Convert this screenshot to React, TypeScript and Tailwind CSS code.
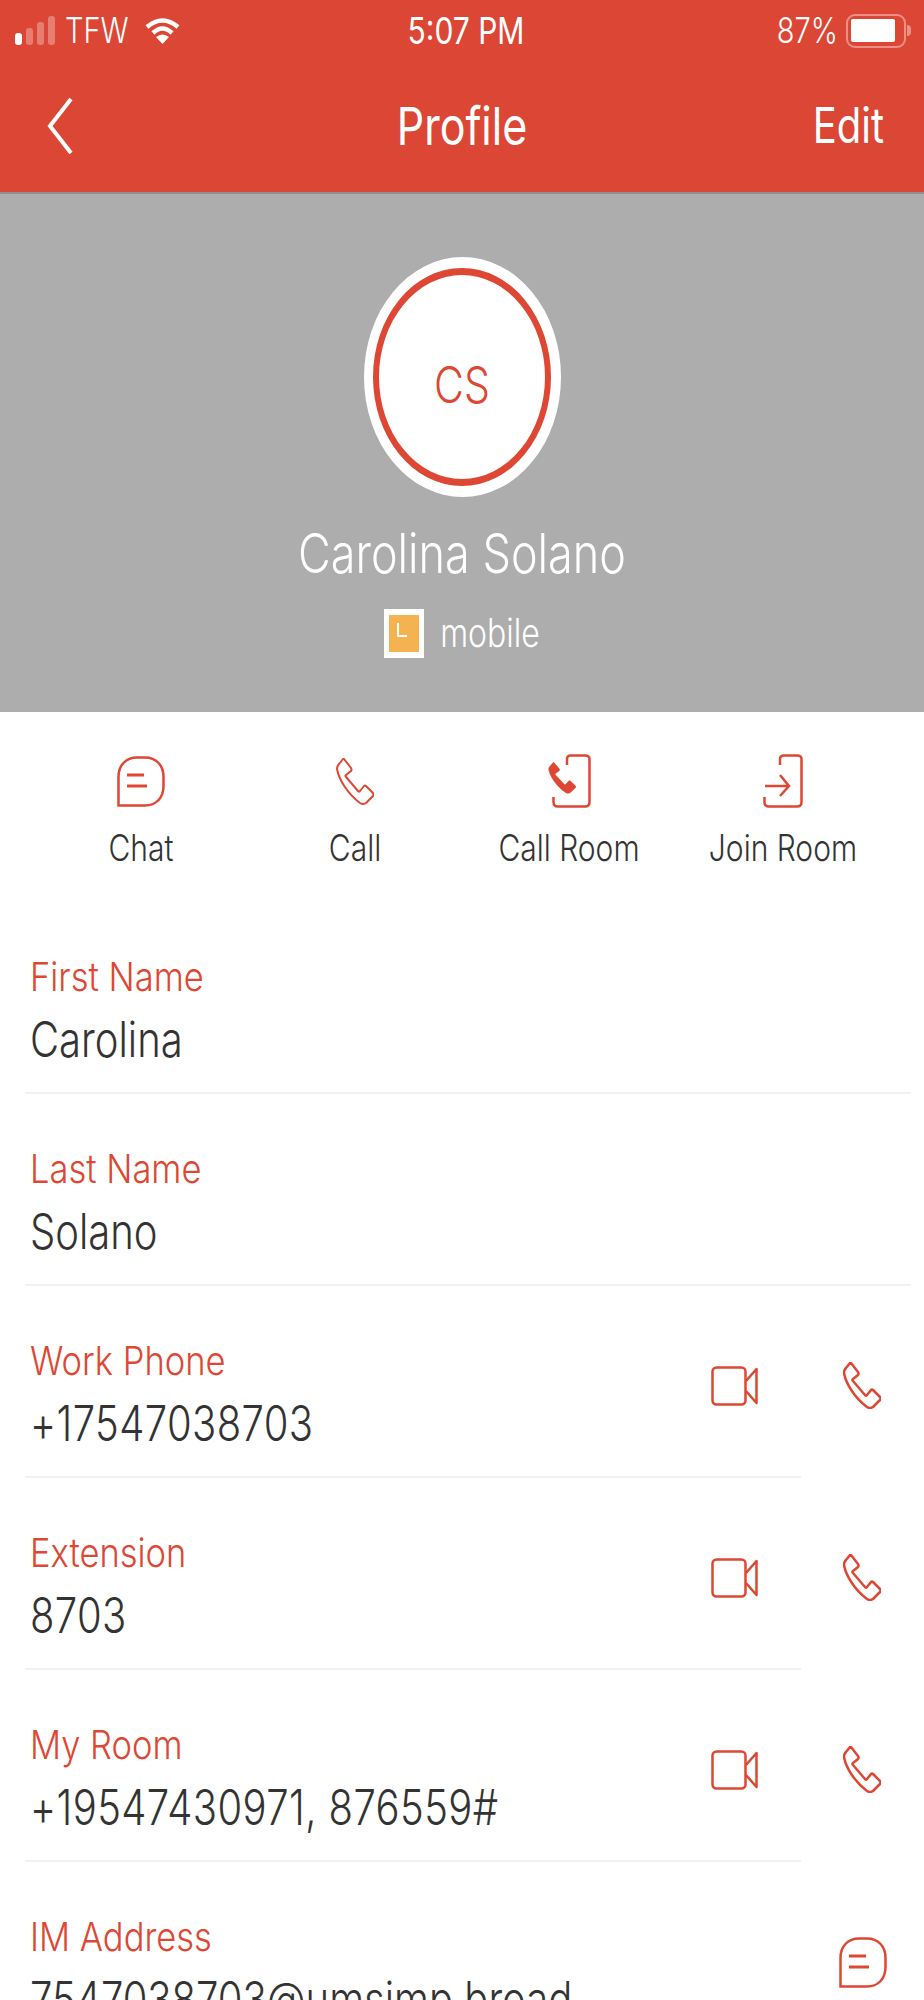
import React from "react";

const T = ({
  className = "",
  sy = "scale-y-[1.22]",
  children,
}: {
  className?: string;
  sy?: string;
  children: React.ReactNode;
}) => <span className={"inline-block origin-center whitespace-nowrap " + sy + " " + className}>{children}</span>;

const PHONE =
  "M8 1 L15 10 Q16 12 15 13 L10 17 Q9 18 10 19 L22 33 Q23 34 24 33 L28 28 Q29 27 30 28 L37 35 Q38 37 37 38 L30 45 Q27 47 24 45 C12 36 3 22 1 11 Q1 8 3 6 L7 1 Q8 0 8 1 Z";

const PhoneIcon = ({ sw = 2.5 }: { sw?: number }) => (
  <svg width="38" height="47" viewBox="0 0 38 47" fill="none" stroke="#dd4733" strokeWidth={sw} strokeLinejoin="round">
    <path d={PHONE} />
  </svg>
);

const VideoIcon = () => (
  <svg width="47" height="40" viewBox="0 0 47 40" fill="none" stroke="#dd4733" strokeWidth="2.5" strokeLinejoin="round">
    <rect x="1.5" y="1.5" width="33" height="37" rx="4" />
    <path d="M35 15 L45.5 3 V37 L35 25" />
  </svg>
);

const ChatIcon = () => (
  <svg width="48" height="51" viewBox="0 0 48 51" fill="none" stroke="#dd4733" strokeWidth="2.5">
    <path d="M1.5 49.5 V21 C1.5 9 9 1.5 20 1.5 H28 C39 1.5 46.5 9 46.5 21 V30 C46.5 42 39 49.5 28 49.5 Z" />
    <path d="M10 19 H27 M10 30 H30" strokeWidth="3" />
  </svg>
);

const CallRoomIcon = () => (
  <svg width="43" height="54" viewBox="0 0 43 54" fill="none" stroke="#dd4733" strokeWidth="2.5">
    <path d="M19 11 V5 Q19 1.5 23 1.5 H37 Q41.5 1.5 41.5 5 V48 Q41.5 52.5 37 52.5 H10 Q5.5 52.5 5.5 48 V43" />
    <path d={PHONE} transform="translate(0 8) scale(.74 .68)" fill="#dd4733" strokeWidth="1" />
  </svg>
);

const JoinRoomIcon = () => (
  <svg width="40" height="54" viewBox="0 0 40 54" fill="none" stroke="#dd4733" strokeWidth="2.5">
    <path d="M17 11 V5 Q17 1.5 21 1.5 H34 Q38.5 1.5 38.5 5 V48 Q38.5 52.5 34 52.5 H6 Q1.5 52.5 1.5 48 V43" />
    <path d="M2 32 H26 M17 21 L26 32 L17 42" />
  </svg>
);

const actions = [
  { label: "Chat", icon: <ChatIcon /> },
  { label: "Call", icon: <PhoneIcon sw={2} /> },
  { label: "Call Room", icon: <CallRoomIcon /> },
  { label: "Join Room", icon: <JoinRoomIcon /> },
];

const Row = ({
  label,
  value,
  kind,
  digits,
}: {
  label: string;
  value: string;
  kind?: "call" | "chat";
  digits?: boolean;
}) => (
  <div className="flex h-[192px]">
    <div
      className={
        "ml-[25px] shrink-0 border-b-2 border-[#f2f2f2] pl-[5px] pt-[55px] " + (kind ? "w-[776px]" : "w-[886px]")
      }
    >
      <div className="flex h-[40px] items-center text-[34.5px] font-light text-[#dd4733]">
        <T sy="scale-y-[1.16]">{label}</T>
      </div>
      <div
        className={
          "mt-[21px] flex h-[44px] items-center text-[40px] font-light text-[#333333] " +
          (digits ? "tracking-[0.4px]" : "")
        }
      >
        <T>{value}</T>
      </div>
    </div>
    {kind === "call" && (
      <div className="flex flex-1 items-start pt-[76px]">
        <div className="ml-[-90px] flex w-[47px] justify-center pt-[4px]">
          <VideoIcon />
        </div>
        <div className="ml-[85px] w-[38px]">
          <PhoneIcon />
        </div>
      </div>
    )}
    {kind === "chat" && (
      <div className="flex flex-1 items-start pl-[38px] pt-[75px]">
        <ChatIcon />
      </div>
    )}
  </div>
);

export default function App() {
  return (
    <div className="h-[2000px] w-[924px] overflow-hidden bg-white font-['Inter',sans-serif]">
      <header className="h-[192px] bg-[#dc4735] text-white">
        <div className="grid h-[60px] grid-cols-3 items-center pt-[1px]">
          <div className="flex items-center pl-[15px]">
            <svg width="40" height="29" viewBox="0 0 40 29" fill="#fff">
              <rect x="0" y="17" width="7" height="12" rx="3" />
              <rect x="11" y="12" width="7" height="17" rx="3" opacity=".3" />
              <rect x="22" y="6" width="7" height="23" rx="3" opacity=".3" />
              <rect x="33" y="0" width="7" height="29" rx="3" opacity=".3" />
            </svg>
            <div className="ml-[10px] text-[29px] font-light leading-none">
              <T>TFW</T>
            </div>
            <svg className="ml-[16px]" width="35" height="27" viewBox="0 0 35 27" fill="none" stroke="#fff" strokeWidth="4.5">
              <path d="M2 10 Q17.5 -3 33 10" />
              <path d="M8 16 Q17.5 7 27 16" />
              <path d="M17.5 27 L11 20 Q17.5 15 24 20 Z" fill="#fff" stroke="none" />
            </svg>
          </div>
          <div className="pl-[8px] text-center text-[30px] leading-none">
            <T>5:07 PM</T>
          </div>
          <div className="flex items-center justify-end pr-[13px]">
            <div className="mr-[-1px] text-[29px] font-light leading-none">
              <T>87%</T>
            </div>
            <div className="ml-[9px] flex h-[34px] w-[60px] items-center rounded-[9px] border-2 border-white/40 pl-[3px]">
              <div className="h-[23px] w-[44px] rounded-[2px] bg-white" />
            </div>
            <div className="ml-[1px] h-[11px] w-[4px] rounded-r-full bg-white/40" />
          </div>
        </div>
        <div className="grid h-[132px] grid-cols-3 items-center">
          <div className="pl-[47px]">
            <svg className="block" width="26" height="56" viewBox="0 0 26 56" fill="none" stroke="#fff" strokeWidth="4">
              <path d="M24 1 L3 28 L24 55" />
            </svg>
          </div>
          <div className="text-center text-[43px] leading-none">
            <T>Profile</T>
          </div>
          <div className="pr-[40px] text-right text-[40px] leading-none">
            <T>Edit</T>
          </div>
        </div>
      </header>

      <section className="flex h-[520px] flex-col items-center border-t-2 border-[#8f8f8f] bg-[#adadad] pt-[63px]">
        <div className="flex h-[240px] w-[197px] items-center justify-center rounded-[50%] bg-white">
          <div className="flex h-[218px] w-[178px] items-center justify-center rounded-[50%] border-x-[6px] border-y-[7px] border-[#dd4733] pt-[18px] text-[41px] font-light text-[#dd4733]">
            <T>CS</T>
          </div>
        </div>
        <div className="mt-[36px] flex h-[40px] items-center text-[45px] font-light text-white">
          <T>Carolina Solano</T>
        </div>
        <div className="mt-[36px] flex items-center">
          <div className="flex h-[49px] w-[40px] border-x-[5px] border-y-[6px] border-white bg-[#f4b350] pl-[8px] pt-[8px]">
            <div className="h-[14px] w-[10px] border-b-2 border-l-2 border-white" />
          </div>
          <div className="ml-[16px] text-[32px] font-light leading-none text-white">
            <T>mobile</T>
          </div>
        </div>
      </section>

      <section className="grid h-[190px] grid-cols-4 px-[34px] pt-[42px]">
        {actions.map((a) => (
          <div key={a.label} className="flex flex-col items-center">
            <div className="flex h-[54px] items-center">{a.icon}</div>
            <div className="mt-[25px] text-[30px] font-light leading-none text-[#333333]">
              <T>{a.label}</T>
            </div>
          </div>
        ))}
      </section>

      <Row label="First Name" value="Carolina" />
      <Row label="Last Name" value="Solano" />
      <Row label="Work Phone" value="+17547038703" kind="call" digits />
      <Row label="Extension" value="8703" kind="call" digits />
      <Row label="My Room" value="+19547430971, 876559#" kind="call" digits />
      <Row label="IM Address" value="7547038703@umsimp.broad" kind="chat" />
    </div>
  );
}
